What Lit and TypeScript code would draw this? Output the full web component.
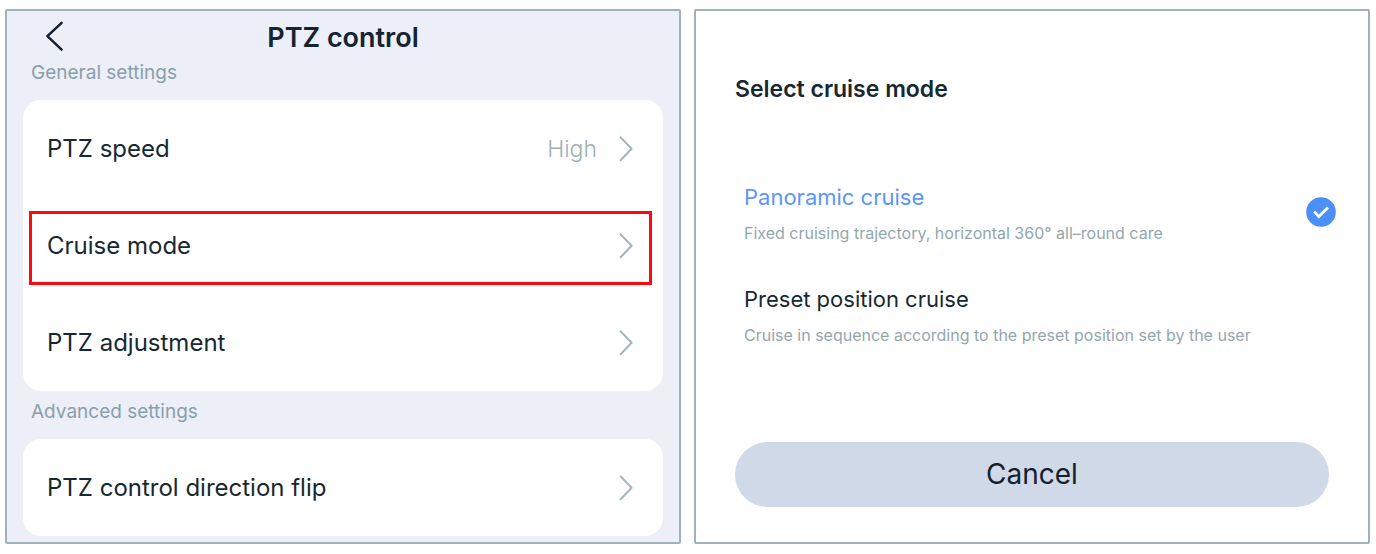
import { LitElement, html, css, nothing } from "lit";
import { customElement, property, state } from "lit/decorators.js";

interface SettingRow {
  label: string;
  value?: string;
  marked?: boolean;
}

interface CruiseMode {
  id: string;
  name: string;
  detail: string;
}

const GENERAL: SettingRow[] = [
  { label: "PTZ speed", value: "High" },
  { label: "Cruise mode", marked: true },
  { label: "PTZ adjustment" },
];

const ADVANCED: SettingRow[] = [{ label: "PTZ control direction flip" }];

const MODES: CruiseMode[] = [
  {
    id: "panoramic",
    name: "Panoramic cruise",
    detail: "Fixed cruising trajectory, horizontal 360° all–round care",
  },
  {
    id: "preset",
    name: "Preset position cruise",
    detail: "Cruise in sequence according to the preset position set by the user",
  },
];

@customElement("settings-card")
export class SettingsCard extends LitElement {
  @property({ attribute: false }) rows: SettingRow[] = [];

  static styles = css`
    :host {
      display: block;
      margin-bottom: 4px;
      background: #fff;
      border-radius: 18px;
    }
    .list {
      list-style: none;
      margin: 0;
      padding: 0;
    }
    .item {
      position: relative;
    }
    .row {
      display: flex;
      align-items: center;
      width: 100%;
      padding: 33px 28px 32px 24px;
      border: 0;
      background: none;
      color: #182830;
      font: inherit;
      font-size: 24px;
      line-height: 32px;
      text-align: left;
      cursor: pointer;
    }
    .label {
      flex: 1;
    }
    .value {
      color: #9db1b7;
      font-size: 23px;
      font-weight: 300;
      margin-right: 20px;
    }
    .chevron {
      width: 18px;
      height: 28px;
      fill: none;
      stroke: #a2b5ba;
      stroke-width: 2;
      stroke-linecap: round;
      stroke-linejoin: round;
    }
    .mark {
      position: absolute;
      inset: 14px 11px 9px 6px;
      border: 3px solid #fb0a10;
      pointer-events: none;
    }
  `;

  render() {
    return html`<ul class="list">
      ${this.rows.map(
        (row) => html`<li class="item">
          <button class="row" type="button">
            <span class="label">${row.label}</span>
            ${row.value ? html`<span class="value">${row.value}</span>` : nothing}
            <svg class="chevron" viewBox="0 0 18 28" aria-hidden="true">
              <path d="M3.6 2.4 L14.6 13.8 L3.6 25.2" />
            </svg>
          </button>
          ${row.marked ? html`<div class="mark"></div>` : nothing}
        </li>`
      )}
    </ul>`;
  }
}

@customElement("app-root")
export class AppRoot extends LitElement {
  @state() private mode = "panoramic";

  static styles = css`
    :host {
      display: grid;
      grid-template-columns: 1fr 1fr;
      gap: 13px;
      padding: 9px 6px 10px 5px;
      background: #fff;
      color: #182830;
      font-family: Inter, "Liberation Sans", sans-serif;
    }
    .panel {
      border: 2px solid #9fb2b8;
      border-radius: 2px;
    }
    .settings {
      background: #eceef8;
      padding: 0 16px 2px;
    }
    .bar {
      display: grid;
      grid-template-columns: 32px 1fr 32px;
      align-items: start;
      padding: 9px 16px 0;
    }
    .back {
      display: flex;
      justify-content: center;
      padding: 0;
      border: 0;
      background: none;
      cursor: pointer;
    }
    .back-icon {
      width: 24px;
      height: 32px;
      fill: none;
      stroke: #142030;
      stroke-width: 2.5;
      stroke-linecap: round;
      stroke-linejoin: round;
    }
    .title {
      margin: 0;
      text-align: center;
      font-size: 27px;
      line-height: 36px;
      font-weight: 600;
      color: #142430;
    }
    .section {
      margin: 0;
      padding: 4px 8px 14px;
      font-size: 19px;
      line-height: 26px;
      font-weight: 400;
      color: #8a9faa;
    }
    .picker {
      display: flex;
      flex-direction: column;
      padding: 60px 39px 35px;
    }
    .heading {
      margin: 0;
      font-size: 23px;
      line-height: 36px;
      font-weight: 600;
    }
    .modes {
      display: flex;
      flex-direction: column;
      gap: 40px;
      margin: 0 -7px 0 0;
      padding: 74px 0 0;
      border: 0;
    }
    .mode {
      display: grid;
      grid-template-columns: 1fr 30px;
      align-items: center;
      padding-left: 9px;
      cursor: pointer;
    }
    .text {
      display: flex;
      flex-direction: column;
      gap: 10px;
    }
    .name {
      font-size: 22px;
      line-height: 32px;
    }
    .name.on {
      color: #5a97f6;
    }
    .detail {
      font-size: 16px;
      line-height: 20px;
      color: #93a7ac;
    }
    .radio,
    .tick {
      grid-column: 2;
      grid-row: 1;
      width: 30px;
      height: 30px;
      margin: 0;
    }
    .radio {
      opacity: 0;
    }
    .cancel {
      margin-top: auto;
      padding: 12px;
      border: 0;
      border-radius: 33px;
      background: #d0d9e7;
      color: #142030;
      font: inherit;
      font-size: 28px;
      line-height: 41px;
      cursor: pointer;
    }
  `;

  render() {
    return html`
      <section class="panel settings">
        <header class="bar">
          <button class="back" type="button" aria-label="Back">
            <svg class="back-icon" viewBox="0 0 24 32" aria-hidden="true">
              <path d="M18.6 2.8 L4.4 16.2 L18.6 29.6" />
            </svg>
          </button>
          <h1 class="title">PTZ control</h1>
        </header>
        <h2 class="section">General settings</h2>
        <settings-card .rows=${GENERAL}></settings-card>
        <h2 class="section">Advanced settings</h2>
        <settings-card .rows=${ADVANCED}></settings-card>
      </section>
      <section class="panel picker">
        <h2 class="heading" id="heading">Select cruise mode</h2>
        <fieldset class="modes" aria-labelledby="heading">
          ${MODES.map((m) => {
            const on = m.id === this.mode;
            return html`<label class="mode">
              <span class="text">
                <span class="name ${on ? "on" : ""}">${m.name}</span>
                <span class="detail">${m.detail}</span>
              </span>
              <input
                class="radio"
                type="radio"
                name="mode"
                .checked=${on}
                @change=${() => (this.mode = m.id)}
              />
              ${on
                ? html`<svg class="tick" viewBox="0 0 30 30" aria-hidden="true">
                    <circle cx="15" cy="15" r="14.8" fill="#4b90f8" />
                    <path
                      d="M8.2 14.6 L12.8 19.6 L22 10.4"
                      fill="none"
                      stroke="#fff"
                      stroke-width="2.8"
                    />
                  </svg>`
                : nothing}
            </label>`;
          })}
        </fieldset>
        <button class="cancel" type="button">Cancel</button>
      </section>
    `;
  }
}
